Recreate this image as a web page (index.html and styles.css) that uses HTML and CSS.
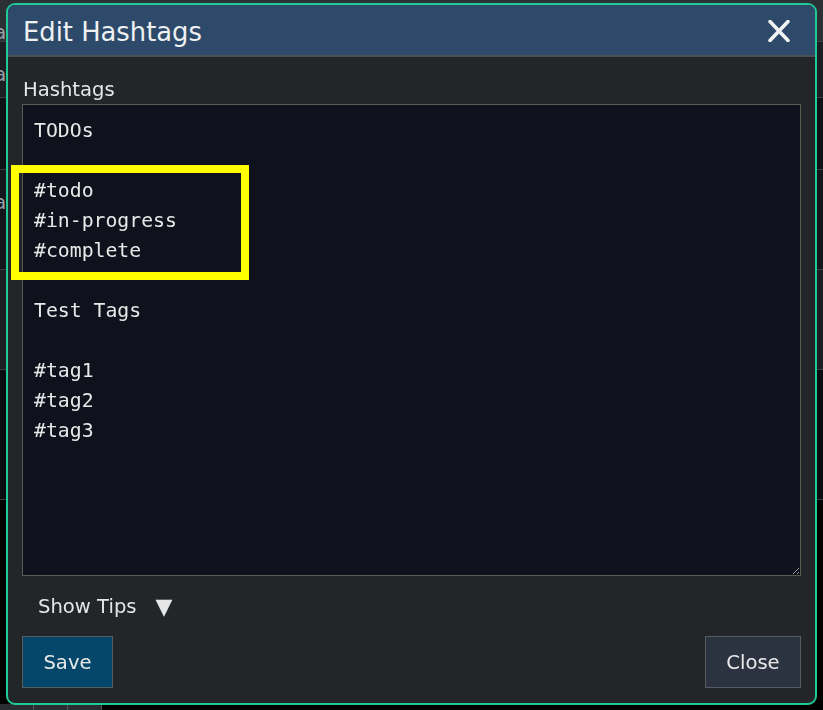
FILE: index.html
```html
<!DOCTYPE html>
<html lang="en">
<head>
<meta charset="utf-8">
<title>Edit Hashtags</title>
<link rel="stylesheet" href="styles.css">
</head>
<body>
<div class="backdrop">
  <div class="bg-row bg-r1"><span class="bg-text">a</span></div>
  <div class="bg-row bg-r2"><span class="bg-text">a</span></div>
  <div class="bg-row bg-r3"></div>
  <div class="bg-row bg-r4"><span class="bg-text">a</span></div>
  <div class="bg-row bg-r5"></div>
  <div class="bg-row bg-r6"><span class="bg-text">i</span></div>
  <div class="bg-row bg-r7"></div>
  <div class="bg-tabs"><span class="bg-tab"></span><span class="bg-tab"></span><span class="bg-tab"></span></div>
</div>

<div class="modal">
  <div class="modal-header">
    <h1 class="modal-title">Edit Hashtags</h1>
    <button class="close-x" aria-label="Close">
      <svg width="24" height="22" viewBox="0 0 24 22"><path d="M3 1.5 L21 20.5 M21 1.5 L3 20.5" stroke="#f2f2f2" stroke-width="3.6" stroke-linecap="round" fill="none"/></svg>
    </button>
  </div>
  <div class="modal-body">
    <label class="field-label" for="tags">Hashtags</label>
    <textarea id="tags" class="tags-area" spellcheck="false">TODOs

#todo
#in-progress
#complete

Test Tags

#tag1
#tag2
#tag3</textarea>
    <div class="tips">Show Tips <span class="tips-arrow">▼</span></div>
    <div class="actions">
      <button class="btn btn-save">Save</button>
      <button class="btn btn-close">Close</button>
    </div>
  </div>
  <div class="highlight"></div>
</div>
</body>
</html>
```

FILE: styles.css
```css
* { box-sizing: border-box; }
html, body {
  margin: 0;
  padding: 0;
  width: 823px;
  height: 710px;
  overflow: hidden;
  background: #000;
  font-family: "DejaVu Sans", Verdana, sans-serif;
  color: #e6e6e6;
}

.backdrop {
  display: flex;
  flex-direction: column;
  width: 823px;
  height: 710px;
}
.bg-row { position: relative; border-bottom: 1px solid #3a3f44; }
.bg-text { font-size: 20px; color: #9aa0a6; line-height: 1; display: block; padding: 22px 0 0 0; margin-left: -6px; }
.bg-r1 { height: 42px; background: #2b3035; }
.bg-r2 { height: 56px; background: #1b1f24; }
.bg-r3 { height: 72px; background: #0e1118; }
.bg-r4 { height: 100px; background: #13171c; }
.bg-r5 { height: 100px; background: #1b1f24; }
.bg-r6 { height: 130px; background: #0b0d10; }
.bg-r7 { flex: 1; background: #000; border-bottom: 0; }
.bg-tabs { display: flex; height: 6px; background: #000; }
.bg-tab { width: 34px; height: 6px; background: #2a2e33; border-right: 1px solid #555; }

.modal {
  position: fixed;
  top: 3px;
  left: 6px;
  width: 811px;
  height: 702px;
  border: 2px solid #20c997;
  border-radius: 9px;
  background: #222629;
  display: flex;
  flex-direction: column;
  overflow: hidden;
}

.modal-header {
  height: 54px;
  background: #2d4a6a;
  border-bottom: 2px solid #4b5057;
  display: flex;
  align-items: center;
  justify-content: space-between;
  padding: 0 24px 0 15px;
}
.modal-title {
  margin: 0;
  padding-top: 5px;
  font-size: 25.8px;
  font-weight: normal;
  color: #eef0f2;
  line-height: 1;
}
.close-x {
  background: none;
  border: 0;
  padding: 2px 0 0 0;
  display: flex;
  align-items: center;
  cursor: pointer;
}

.modal-body {
  flex: 1;
  display: flex;
  flex-direction: column;
  padding: 21px 14px 15px 14px;
}
.field-label {
  font-size: 19.6px;
  line-height: 24px;
  color: #e6e6e6;
  margin: 0 0 2px 1px;
}
.tags-area {
  width: 779px;
  height: 472px;
  background: #0f121d;
  border: 1px solid #5d5a52;
  border-radius: 0;
  color: #e8e8e8;
  font-family: "DejaVu Sans Mono", monospace;
  font-size: 19.8px;
  line-height: 30px;
  padding: 11px 11px 10px;
  resize: vertical;
  outline: none;
  margin: 0;
}
.tips {
  font-size: 19.6px;
  line-height: 24px;
  margin: 19px 0 0 16px;
  color: #e6e6e6;
  display: flex;
  align-items: center;
}
.tips-arrow { margin-left: 19px; font-size: 22px; line-height: 24px; }
.actions {
  margin-top: 17px;
  display: flex;
  justify-content: space-between;
}
.btn {
  height: 52px;
  font-family: "DejaVu Sans", Verdana, sans-serif;
  font-size: 19.6px;
  color: #e8e8e8;
  border: 1px solid #585c60;
  border-radius: 0;
  padding: 0 20px;
  cursor: pointer;
}
.btn-save { background: #05476b; width: 91px; }
.btn-close { background: #2c3340; width: 96px; }

.highlight {
  position: absolute;
  left: 3px;
  top: 160px;
  width: 238px;
  height: 115px;
  border: 8px solid #ffff00;
  pointer-events: none;
}
```
